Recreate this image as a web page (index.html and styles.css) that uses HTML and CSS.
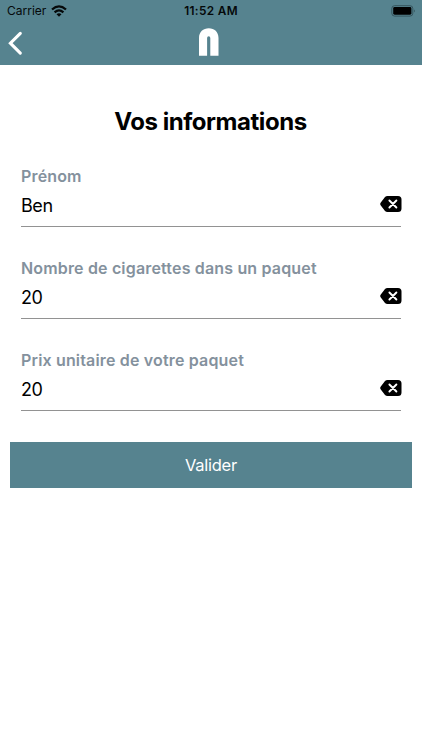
FILE: index.html
```html
<!DOCTYPE html>
<html lang="fr">
<head>
<meta charset="utf-8">
<meta name="viewport" content="width=device-width, initial-scale=1">
<title>Vos informations</title>
<link rel="stylesheet" href="styles.css">
</head>
<body>
<header class="header">
  <div class="status">
    <div class="carrier"><span>Carrier</span>
      <svg class="wifi" width="16" height="12" viewBox="0 0 16 12"><g fill="none" stroke="#05090a" stroke-width="2.3"><path d="M1 4.5Q8-1.7 15 4.5"/><path d="M3.6 7.3Q8 3.4 12.4 7.3"/></g><path fill="#05090a" d="M5.5 9.2Q8 7.1 10.5 9.2L8 11.7Z"/></svg>
    </div>
    <span class="time">11:52 AM</span>
    <svg class="battery" width="25" height="12" viewBox="0 0 25 12"><rect x=".8" y=".7" width="21" height="10.4" rx="2.8" fill="none" stroke="#35545d"/><rect x="2.2" y="2.1" width="18.2" height="7.6" rx="1.4" fill="#000"/><path d="M23.2 4.2Q24.7 5.9 23.2 7.6Z" fill="#2b464e"/></svg>
  </div>
  <nav class="nav">
    <svg class="back" width="16" height="26" viewBox="0 0 16 26"><path d="M12.3 3.3 2.4 13.2 12.3 23.1" fill="none" stroke="#fff" stroke-width="3.1" stroke-linecap="round" stroke-linejoin="miter"/></svg>
    <svg class="logo" width="20" height="28" viewBox="0 0 20 28"><path fill="#fff" d="M0 27.8V10C0 3.8 4.2.2 9.8.2S19.5 3.8 19.5 10V27.8H11.3V9.9Q11.3 8.3 9.7 8.3T8.1 9.9V27.8Z"/></svg>
  </nav>
</header>
<main class="content">
  <h1 class="title"><span>Vos informations</span></h1>
  <form class="form">
    <div class="field">
      <div class="label">Prénom</div>
      <div class="row"><span class="value">Ben</span><svg class="clear" width="22" height="16" viewBox="0 0 22 16"><path d="M7.5 0H18Q21.5 0 21.5 3.5V12.5Q21.5 16 18 16H7.5Q6 16 5 14.9L.8 9.5Q-.4 8 .8 6.5L5 1.1Q6 0 7.5 0Z"/><path d="m9.4 4.5 7 7m0-7-7 7" stroke="#fff" stroke-width="1.9" stroke-linecap="round"/></svg></div>
    </div>
    <div class="field">
      <div class="label">Nombre de cigarettes dans un paquet</div>
      <div class="row"><span class="value">20</span><svg class="clear" width="22" height="16" viewBox="0 0 22 16"><path d="M7.5 0H18Q21.5 0 21.5 3.5V12.5Q21.5 16 18 16H7.5Q6 16 5 14.9L.8 9.5Q-.4 8 .8 6.5L5 1.1Q6 0 7.5 0Z"/><path d="m9.4 4.5 7 7m0-7-7 7" stroke="#fff" stroke-width="1.9" stroke-linecap="round"/></svg></div>
    </div>
    <div class="field">
      <div class="label">Prix unitaire de votre paquet</div>
      <div class="row"><span class="value">20</span><svg class="clear" width="22" height="16" viewBox="0 0 22 16"><path d="M7.5 0H18Q21.5 0 21.5 3.5V12.5Q21.5 16 18 16H7.5Q6 16 5 14.9L.8 9.5Q-.4 8 .8 6.5L5 1.1Q6 0 7.5 0Z"/><path d="m9.4 4.5 7 7m0-7-7 7" stroke="#fff" stroke-width="1.9" stroke-linecap="round"/></svg></div>
    </div>
    <button class="submit" type="button">Valider</button>
  </form>
</main>
</body>
</html>
```
FILE: styles.css
```css
* { box-sizing: border-box; }
body { margin: 0; min-height: 750px; background: #fff; color: #000; font-family: Inter, "Liberation Sans", sans-serif; }
svg { display: block; flex: none; }
.header { height: 65px; background: #56838f; }
.status { display: grid; grid-template-columns: 1fr auto 1fr; align-items: center; height: 22px; padding: 0 6px 0 7px; color: #05090a; }
.carrier { display: flex; align-items: center; gap: 5px; margin-top: -1px; font-size: 12px; }
.time { margin-left: -1px; font-size: 11.8px; font-weight: 600; letter-spacing: .35px; }
.battery { justify-self: end; margin-top: -1px; }
.nav { display: grid; grid-template-columns: 1fr 20px 1fr; align-items: center; height: 42px; padding: 0 6px 0 7.5px; }
.logo { margin-left: -3px; margin-top: -2px; }
.content { padding: 40.5px 10.5px 0 10.3px; }
.title { margin: 0; padding-right: 1px; text-align: center; font-size: 24px; line-height: 32px; font-weight: 700; letter-spacing: -.45px; }
.form { padding-top: 28px; }
.field { height: 61.5px; margin: 0 10.2px 30.5px 10.7px; border-bottom: 1px solid #929292; }
.label { color: #84919d; font-size: 16px; line-height: 20px; font-weight: 600; letter-spacing: .165px; white-space: nowrap; }
.row { display: flex; align-items: center; justify-content: space-between; height: 38px; }
.value { padding-top: 2px; font-size: 18px; line-height: 38px; letter-spacing: -.4px; }
.clear { margin: -1px -1px 0 0; }
.submit { display: block; width: 100%; height: 46px; border: 0; padding: 0; background: #56838f; color: #fff; font: 400 16.5px/46px Inter, "Liberation Sans", sans-serif; letter-spacing: -.25px; }
```
